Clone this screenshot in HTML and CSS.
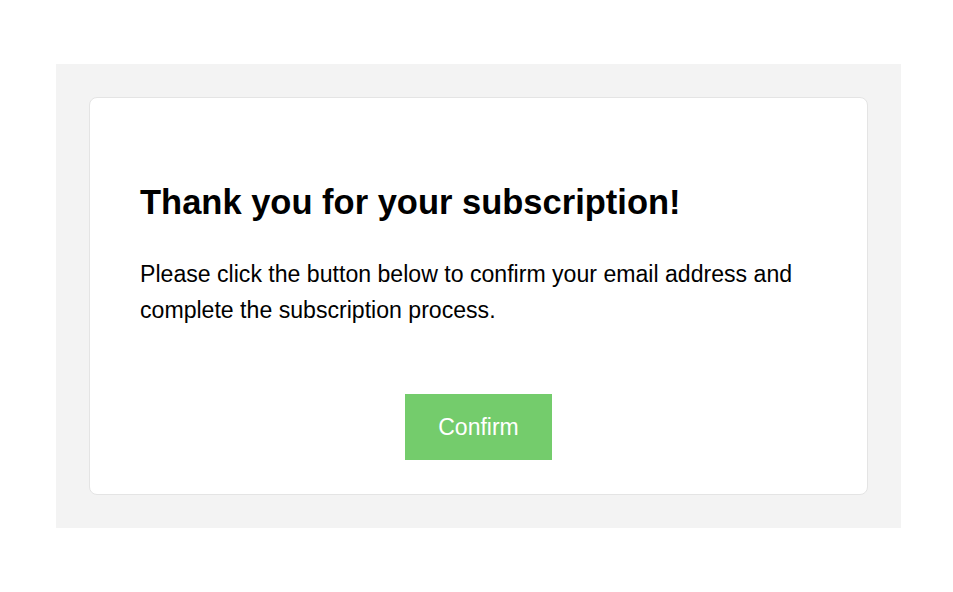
FILE: index.html
```html
<!DOCTYPE html>
<html>
<head>
<meta charset="utf-8">
<link rel="stylesheet" href="styles.css">
</head>
<body>
<div class="outer">
  <div class="card">
    <h1 class="title">Thank you for your subscription!</h1>
    <p class="text">Please click the button below to confirm your email address and complete the subscription process.</p>
    <div class="actions">
      <a class="btn" href="#">Confirm</a>
    </div>
  </div>
</div>
</body>
</html>
```
FILE: styles.css
```css
html, body {
  margin: 0;
  padding: 0;
  background: #ffffff;
  font-family: "Liberation Sans", Arial, sans-serif;
}
body {
  padding: 64px 52px 0 56px;
}
.outer {
  background: #f3f3f3;
  padding: 33px;
  height: 464px;
  box-sizing: border-box;
}
.card {
  background: #ffffff;
  border: 1px solid #e4e4e4;
  border-radius: 8px;
  height: 398px;
  box-sizing: border-box;
  padding: 84px 50px 0 50px;
}
.title {
  margin: 0;
  font-size: 34.5px;
  font-weight: bold;
  line-height: 40px;
  color: #000;
}
.text {
  margin: 34px 0 0 0;
  font-size: 23.1px;
  line-height: 36px;
  color: #000;
}
.actions {
  display: flex;
  justify-content: center;
  margin-top: 66px;
}
.btn {
  display: block;
  width: 147px;
  height: 66px;
  line-height: 66px;
  text-align: center;
  background: #74cc6c;
  color: #ffffff;
  font-size: 23px;
  text-decoration: none;
}
```
